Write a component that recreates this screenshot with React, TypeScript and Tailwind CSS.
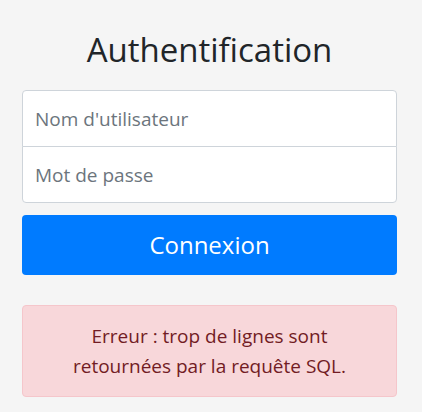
export default function App() {
  return (
    <div className="min-h-[412px] bg-[#f5f5f5] font-['Open_Sans',sans-serif]">
      <div className="ml-[22px] w-[375px] pt-[26px]">
        <h1 className="text-center text-[33px] leading-[48px] font-normal text-[#212529]">
          Authentification
        </h1>
        <form className="mt-4" onSubmit={(e) => e.preventDefault()}>
          <input
            type="text"
            placeholder="Nom d'utilisateur"
            className="block h-[57px] w-full rounded-t-[4px] border border-[#ced4da] bg-white px-3 text-[19px] text-[#495057] outline-none placeholder:text-[#6c757d]"
          />
          <input
            type="password"
            placeholder="Mot de passe"
            className="-mt-px block h-[57px] w-full rounded-b-[4px] border border-[#ced4da] bg-white px-3 text-[19px] text-[#495057] outline-none placeholder:text-[#6c757d]"
          />
          <button
            type="submit"
            className="mt-3 block h-[60px] w-full rounded-[4px] bg-[#007bff] text-[24px] text-white"
          >
            Connexion
          </button>
        </form>
        <div className="mt-[30px] rounded-[4px] border border-[#f5c6cb] bg-[#f8d7da] px-5 py-[15px] text-center text-[19px] leading-[30px] text-[#721c24]">
          Erreur : trop de lignes sont
          <br />
          retournées par la requête SQL.
        </div>
      </div>
    </div>
  );
}
